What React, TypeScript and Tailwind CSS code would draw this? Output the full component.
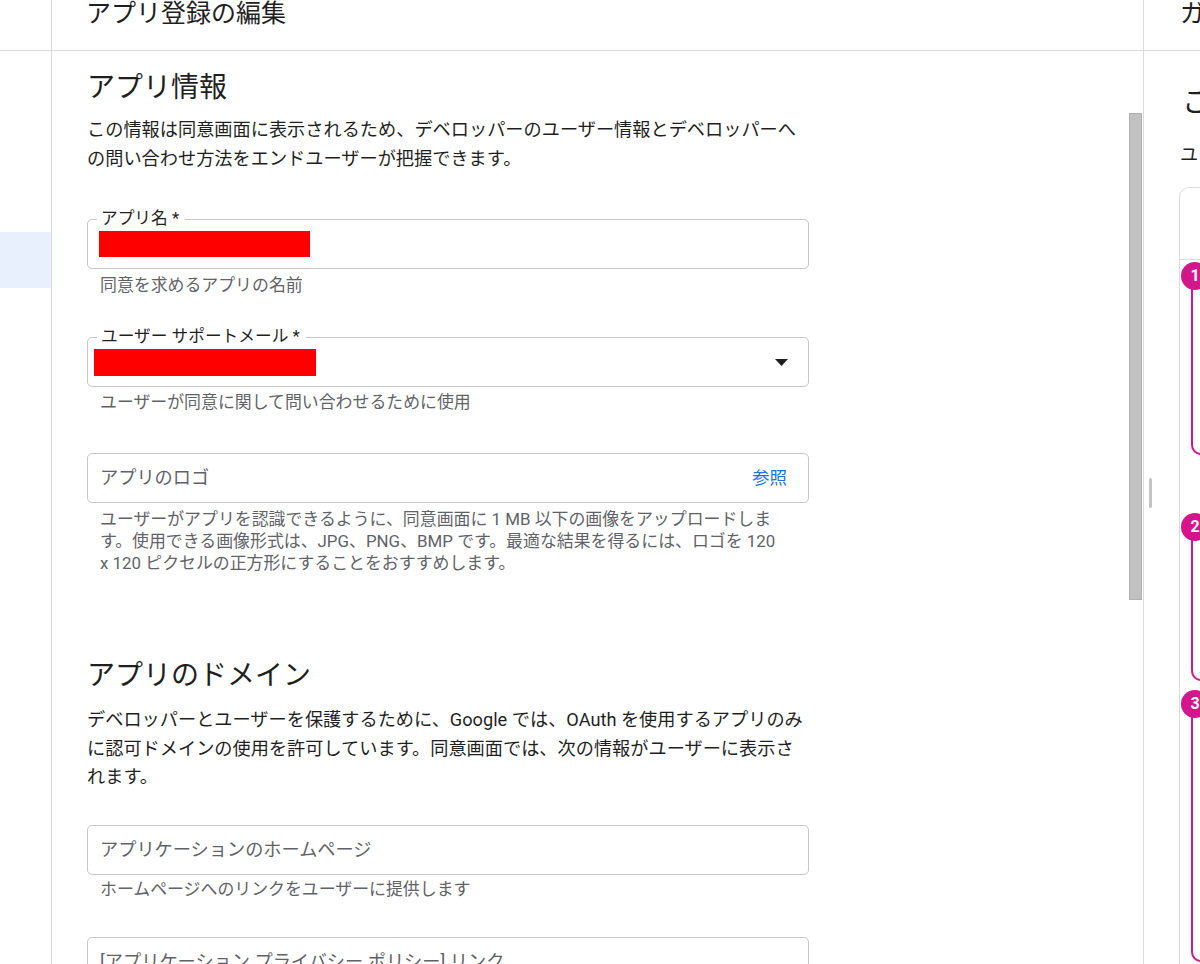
import React from "react";

function Helper({ children, className = "" }: { children: React.ReactNode; className?: string }) {
  return (
    <div className={"pl-[13px] text-[16.9px] leading-[22px] text-[#5f6368] " + className}>{children}</div>
  );
}

function Step({ n, className }: { n: number; className: string }) {
  return (
    <div className={"relative ml-[11px] border-l-2 border-b-2 border-[#d3168b] rounded-bl-[10px] w-[300px] " + className}>
      <div className="absolute left-[-12px] top-[-14px] w-[28px] h-[28px] rounded-full bg-[#d3168b] flex items-center justify-center text-white text-[16px] font-bold leading-none">
        {n}
      </div>
    </div>
  );
}

export default function App() {
  return (
    <div className="w-[1200px] h-[964px] overflow-hidden flex bg-white text-[#1f1f1f] [font-family:Roboto,'Noto_Sans_CJK_JP',sans-serif]">
      {/* sidebar */}
      <div className="w-[52px] shrink-0 border-r border-[#dadce0] flex flex-col">
        <div className="h-[51px] shrink-0 border-b border-[#dadce0]" />
        <div className="h-[181px] shrink-0" />
        <div className="h-[56px] shrink-0 bg-[#e8f0fe]" />
      </div>

      {/* main */}
      <div className="w-[1092px] shrink-0 border-r border-[#dadce0] flex flex-col relative">
        <div className="h-[51px] shrink-0 border-b border-[#dadce0] pl-[34px]">
          <div className="text-[25px] leading-[28px]">アプリ登録の編集</div>
        </div>
        <div className="pl-[35px] pt-[19px] flex flex-col">
          <h2 className="text-[28px] leading-[36px] font-normal">アプリ情報</h2>
          <p className="mt-[10px] text-[18.2px] leading-[28.5px] w-[760px]">
            この情報は同意画面に表示されるため、デベロッパーのユーザー情報とデベロッパーへ
            <br />
            の問い合わせ方法をエンドユーザーが把握できます。
          </p>

          {/* App name */}
          <div className="mt-[46px] relative w-[722px] h-[50px] border border-[#c7c7c7] rounded-[5px] flex items-center pl-[11px]">
            <span className="absolute left-[9px] top-[-11px] bg-white pl-[4px] pr-[6px] text-[16.7px] leading-[20px] text-[#1f1f1f]">
              アプリ名 *
            </span>
            <div className="w-[211px] h-[26px] bg-[#ff0000]" />
          </div>
          <Helper className="mt-[5px]">同意を求めるアプリの名前</Helper>

          {/* support email */}
          <div className="mt-[41px] relative w-[722px] h-[50px] border border-[#c7c7c7] rounded-[5px] flex items-center pl-[6px] pr-[20px]">
            <span className="absolute left-[9px] top-[-11px] bg-white pl-[4px] pr-[6px] text-[16.7px] leading-[20px] text-[#1f1f1f]">
              ユーザー サポートメール *
            </span>
            <div className="w-[222px] h-[27px] bg-[#ff0000]" />
            <div className="flex-1" />
            <svg width="13" height="7" viewBox="0 0 13 7">
              <polygon points="0,0 13,0 6.5,7" fill="#1f1f1f" />
            </svg>
          </div>
          <Helper className="mt-[4px]">ユーザーが同意に関して問い合わせるために使用</Helper>

          {/* logo */}
          <div className="mt-[40px] w-[722px] h-[50px] border border-[#c7c7c7] rounded-[5px] flex items-center pl-[12px] pr-[21px]">
            <span className="text-[18.2px] text-[#5f6368]">アプリのロゴ</span>
            <div className="flex-1" />
            <span className="text-[17.5px] text-[#1a73e8]">参照</span>
          </div>
          <Helper className="mt-[5px]">
            ユーザーがアプリを認識できるように、同意画面に 1 MB 以下の画像をアップロードしま
            <br />
            す。使用できる画像形式は、JPG、PNG、BMP です。最適な結果を得るには、ロゴを 120
            <br />x 120 ピクセルの正方形にすることをおすすめします。
          </Helper>

          <h2 className="mt-[84px] text-[28px] leading-[36px] font-normal">アプリのドメイン</h2>
          <p className="mt-[12px] text-[18.2px] leading-[28.5px] w-[760px]">
            デベロッパーとユーザーを保護するために、Google では、OAuth を使用するアプリのみ
            <br />
            に認可ドメインの使用を許可しています。同意画面では、次の情報がユーザーに表示さ
            <br />
            れます。
          </p>

          <div className="mt-[33px] w-[722px] h-[50px] shrink-0 border border-[#c7c7c7] rounded-[5px] flex items-center pl-[12px]">
            <span className="text-[18.2px] text-[#5f6368]">アプリケーションのホームページ</span>
          </div>
          <Helper className="mt-[3px]">ホームページへのリンクをユーザーに提供します</Helper>

          <div className="mt-[37px] w-[722px] h-[50px] shrink-0 border border-[#c7c7c7] rounded-[5px] flex items-center pl-[12px]">
            <span className="text-[18.2px] text-[#5f6368]">[アプリケーション プライバシー ポリシー] リンク</span>
          </div>
        </div>

        {/* scrollbar thumb */}
        <div className="absolute left-[1077px] top-[113px] w-[13px] h-[487px] bg-[#c1c1c1] border border-[#b0b0b0]" />
      </div>

      {/* right panel */}
      <div className="w-[400px] shrink-0 flex flex-col relative">
        <div className="h-[51px] shrink-0 border-b border-[#dadce0] pl-[36px]">
          <div className="text-[25px] leading-[28px] whitespace-nowrap">ガイド付きの確認</div>
        </div>
        <div className="pl-[35px] pt-[34px] flex flex-col">
          <h2 className="pl-[3px] text-[28px] leading-[36px] font-normal whitespace-nowrap">この画面について</h2>
          <p className="mt-[20px] pl-[1px] text-[18.2px] leading-[28px] whitespace-nowrap">ユーザーに表示される内容を確認できます。</p>
          <div className="mt-[18px] w-[360px] border border-[#dadce0] rounded-tl-[10px] flex flex-col h-[800px]">
            <div className="h-[72px] shrink-0 border-b border-[#dadce0]" />
            <div className="pt-[16px] flex flex-col">
              <Step n={1} className="h-[179px]" />
              <Step n={2} className="mt-[72px] h-[154px]" />
              <Step n={3} className="mt-[23px] h-[258px]" />
            </div>
          </div>
        </div>
        {/* resize handle */}
        <div className="absolute left-[5px] top-[478px] w-[3px] h-[30px] rounded-full bg-[#c4c4c4]" />
      </div>
    </div>
  );
}
